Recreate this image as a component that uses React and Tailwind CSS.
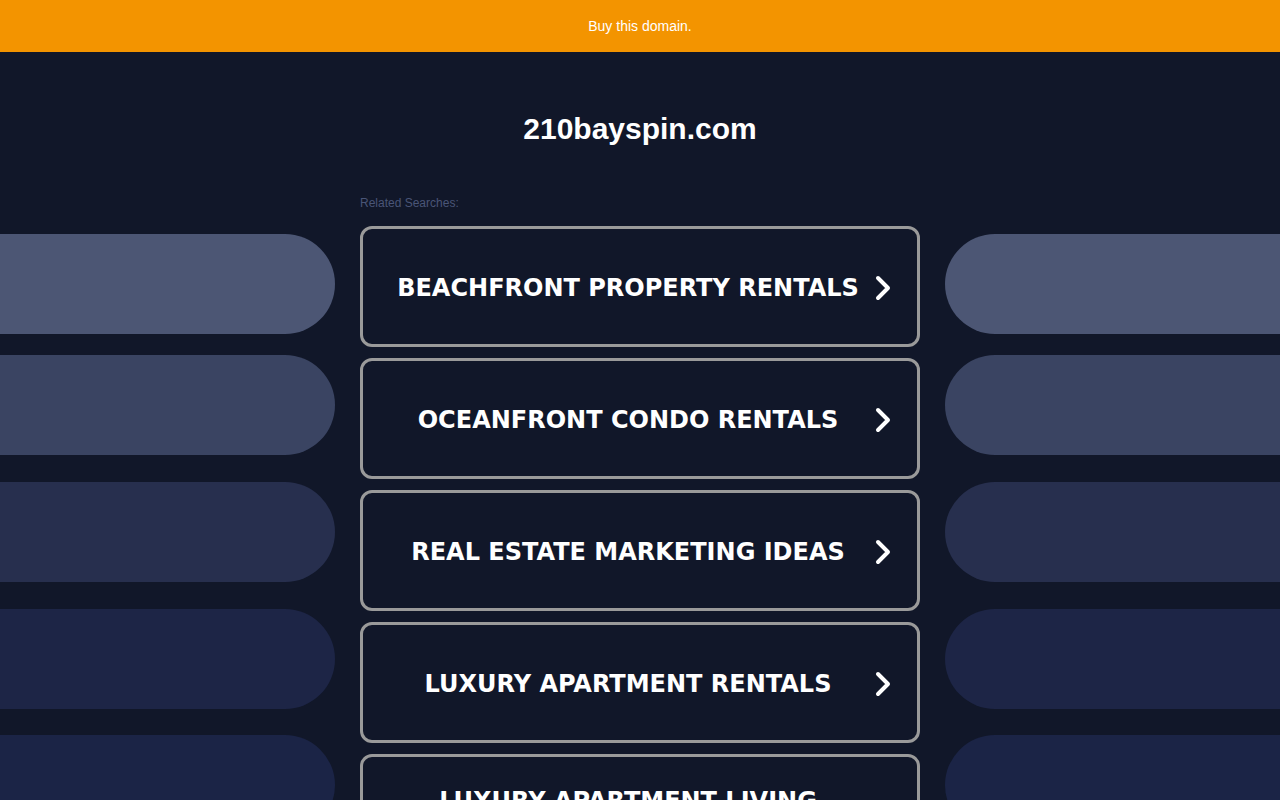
import React from 'react';

const searches = [
  'BEACHFRONT PROPERTY RENTALS',
  'OCEANFRONT CONDO RENTALS',
  'REAL ESTATE MARKETING IDEAS',
  'LUXURY APARTMENT RENTALS',
  'LUXURY APARTMENT LIVING COMMUNITIES',
];

const pills = [
  { color: 'bg-[#4c5674]', gap: 'mt-0' },
  { color: 'bg-[#3a4462]', gap: 'mt-[21px]' },
  { color: 'bg-[#272f4e]', gap: 'mt-[27px]' },
  { color: 'bg-[#1d2546]', gap: 'mt-[27px]' },
  { color: 'bg-[#1b2446]', gap: 'mt-[26px]' },
];

function Chevron() {
  return (
    <svg width="20" height="26" viewBox="0 0 20 26" fill="none">
      <path
        d="M5 3 L15 13 L5 23"
        stroke="#ffffff"
        strokeWidth="4"
        strokeLinecap="round"
        strokeLinejoin="round"
      />
    </svg>
  );
}

function SideColumn({ side }) {
  const round = side === 'left' ? 'rounded-r-full' : 'rounded-l-full';
  return (
    <div className="pt-[44px] flex flex-col">
      {pills.map((p, i) => (
        <div key={i} className={`h-[100px] ${round} ${p.color} ${p.gap}`} />
      ))}
    </div>
  );
}

export default function App() {
  return (
    <div className="h-[800px] overflow-hidden bg-[#111729] font-['Liberation_Sans',Arial,sans-serif]">
      {/* Banner */}
      <div className="h-[52px] bg-[#f39400] flex items-center justify-center">
        <a href="#" className="text-white text-[14px]">Buy this domain.</a>
      </div>

      {/* Domain title */}
      <div className="pt-[57px] h-[138px]">
        <h1 className="text-center text-white font-bold text-[30px] leading-[40px]">210bayspin.com</h1>
      </div>

      {/* Main */}
      <div className="grid grid-cols-[335px_560px_335px] gap-x-[25px]">
        <SideColumn side="left" />

        <div>
          <p className="text-[12px] leading-[16px] text-[#4a5577] pt-[5px] mb-[15px]">Related Searches:</p>
          <div className="flex flex-col gap-[11px]">
            {searches.map((s) => (
              <a
                key={s}
                href="#"
                className="h-[121px] flex items-center border-[3px] border-[#9a9a9a] rounded-[12px] pl-[20px] pr-[24px] pt-[2px]"
              >
                <span className="flex-1 text-center text-white font-bold text-[24px] leading-[30px] font-['DejaVu_Sans',Verdana,sans-serif]">
                  {s}
                </span>
                <span className="w-5 flex justify-center">
                  <Chevron />
                </span>
              </a>
            ))}
          </div>
        </div>

        <SideColumn side="right" />
      </div>
    </div>
  );
}
